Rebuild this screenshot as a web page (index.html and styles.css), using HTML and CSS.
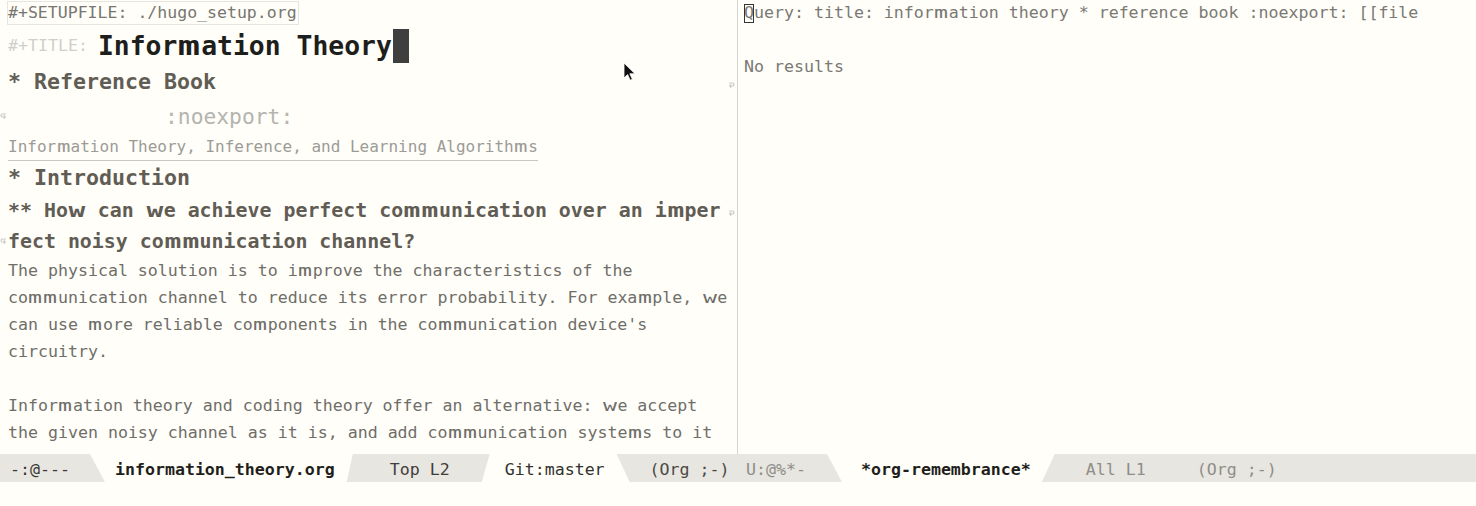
FILE: index.html
```html
<!DOCTYPE html>
<html>
<head>
<meta charset="utf-8">
<link rel="stylesheet" href="styles.css">
</head>
<body>
<div class="frame">
  <div class="windows">
    <div class="win win-left duo">
      <div class="row r1"><span class="meta-box">#+SETUPFILE: ./hugo_setup.org</span></div>
      <div class="row r2"><span class="title-key">#+TITLE: </span><span class="title">Information Theory</span><span class="cursor"></span></div>
      <div class="row r3 h1">* Reference Book<span class="fr fr-right"><svg width="7" height="8" viewBox="0 0 7 8"><path d="M1 1h3.5a1.5 1.5 0 0 1 0 3H1.5M1.5 4l1.8-1.6M1.5 4l1.8 1.6" fill="none" stroke="#c9c9c9" stroke-width="1.2"/></svg></span></div>
      <div class="row r4 tag"><span class="fr fr-left"><svg width="7" height="8" viewBox="0 0 7 8"><path d="M6 1H2.5a1.5 1.5 0 0 0 0 3H5.5M5.5 4l-1.8-1.6M5.5 4l-1.8 1.6" fill="none" stroke="#c9c9c9" stroke-width="1.2"/></svg></span>:noexport:</div>
      <div class="row r5"><span class="link">Information Theory, Inference, and Learning Algorithms</span></div>
      <div class="row r6 h1">* Introduction</div>
      <div class="row r7 h2">** How can we achieve perfect communication over an imper<span class="fr fr-right"><svg width="7" height="8" viewBox="0 0 7 8"><path d="M1 1h3.5a1.5 1.5 0 0 1 0 3H1.5M1.5 4l1.8-1.6M1.5 4l1.8 1.6" fill="none" stroke="#c9c9c9" stroke-width="1.2"/></svg></span></div>
      <div class="row r8 h2"><span class="fr fr-left"><svg width="7" height="8" viewBox="0 0 7 8"><path d="M6 1H2.5a1.5 1.5 0 0 0 0 3H5.5M5.5 4l-1.8-1.6M5.5 4l-1.8 1.6" fill="none" stroke="#c9c9c9" stroke-width="1.2"/></svg></span>fect noisy communication channel?</div>
      <div class="para">
        <div class="line">The physical solution is to improve the characteristics of the</div>
        <div class="line">communication channel to reduce its error probability. For example, we</div>
        <div class="line">can use more reliable components in the communication device's</div>
        <div class="line">circuitry.</div>
        <div class="line"> </div>
        <div class="line">Information theory and coding theory offer an alternative: we accept</div>
        <div class="line">the given noisy channel as it is, and add communication systems to it</div>
      </div>
      <svg class="pointer" width="14" height="20" viewBox="0 0 14 20"><path d="M1 1v15l3.6-3.4 2.6 5.6 2.2-1-2.6-5.4H12z" fill="#111" stroke="#fff" stroke-width="0.8"/></svg>
    </div>
    <div class="divider"></div>
    <div class="win win-right duo">
      <div class="rline"><span class="box-cursor">Q</span>uery: title: information theory * reference book :noexport: [[file</div>
      <div class="rline"> </div>
      <div class="rline">No results</div>
    </div>
  </div>
  <div class="modeline">
    <div class="ml ml-left">
      <span class="seg s-status">-:@---</span>
      <span class="seg light l1">information_theory.org</span>
      <span class="seg s-pos">Top L2</span>
      <span class="seg light l2">Git:master</span>
      <span class="seg s-mode">(Org ;-)</span>
    </div>
    <div class="ml ml-right">
      <span class="seg s-status2">U:@%*-</span>
      <span class="seg light l3">*org-remembrance*</span>
      <span class="seg s-pos2">All L1</span>
      <span class="seg s-mode2">(Org ;-)</span>
    </div>
  </div>
  <div class="echo"></div>
</div>
<script src="script.js"></script>
</body>
</html>
```
FILE: styles.css
```css
* { box-sizing: border-box; }
html, body { margin: 0; padding: 0; }
body {
  background: #fffef9;
  font-family: "DejaVu Sans Mono", "Liberation Mono", monospace;
  width: 1476px;
  height: 506px;
  overflow: hidden;
}
.frame { display: flex; flex-direction: column; width: 1476px; height: 506px; }
.windows { display: flex; height: 454px; }
.win { position: relative; overflow: hidden; height: 454px; }
.win-left { width: 737px; padding-left: 8px; }
.divider { width: 1px; background: #d4d3cf; height: 454px; }
.win-right { flex: 1; padding-left: 6px; }

/* duospace: m and w are one and a half cells wide */
.wide { display: inline-block; transform: scaleX(1.4); margin: 0 0.15em; }

.row { position: relative; white-space: pre; }
.r1 { height: 28px; padding-top: 1px; }
.meta-box {
  display: inline-block;
  border: 1px solid #e6e5e0;
  height: 24px;
  line-height: 22px;
  padding: 0 1px 0 0;
  margin-left: -1px;
  font-size: 16.55px;
  color: #777670;
}
.r2 { height: 36px; line-height: 36px; display: flex; align-items: center; }
.title-key { font-size: 16.6px; color: #cfcfcc; }
.title { font-size: 26.4px; font-weight: bold; color: #1e1e1c; }
.cursor { display: inline-block; width: 16px; height: 34px; background: #3f3f3f; margin-left: 1px; }
.h1 { font-size: 21.6px; font-weight: bold; color: #615c54; }
.h2 { font-size: 19.9px; font-weight: bold; color: #615c54; }
.r3 { height: 36px; line-height: 36px; }
.tag { height: 34px; line-height: 34px; font-size: 21.3px; color: #b5b4af; padding-left: 157px; }
.r5 { height: 27px; line-height: 25px; }
.link {
  display: inline-block;
  font-size: 16px;
  color: #9c9b96;
  border-bottom: 1px solid #c9c8c3;
  line-height: 25px;
  height: 27px;
}
.r6 { height: 33px; line-height: 33px; }
.r7 { height: 32px; line-height: 33px; }
.r8 { height: 31px; line-height: 31px; }

.fr { position: absolute; display: flex; align-items: center; height: 100%; top: 0; }
.fr-left { left: -8px; }
.fr-right { left: 720px; top: 4px; }

.para { font-size: 16.6px; color: #6f6e69; }
.line { height: 27px; line-height: 27px; white-space: pre; }

.pointer { position: absolute; left: 623px; top: 62px; }

.rline { height: 27px; line-height: 25px; font-size: 16.6px; color: #7a7974; white-space: pre; }
.box-cursor { outline: 1px solid #333; outline-offset: -1px; display: inline-block; line-height: 18px; height: 19px; }

.modeline {
  display: flex;
  height: 28px;
  background: #e8e6e0;
  font-size: 16.6px;
}
.ml { display: flex; height: 28px; white-space: pre; }
.ml-left { width: 738px; }
.ml-right { flex: 1; }
.seg { display: block; height: 28px; line-height: 31px; color: #4a4944; }
.light { background: #fffef9; color: #1f1e1b; }
.s-status { padding-left: 10px; color: #3a3935; }
.l1 {
  margin-left: 20px;
  padding: 0 18px 0 25px;
  font-weight: bold;
  clip-path: polygon(0 0, 100% 0, calc(100% - 6px) 100%, 15px 100%);
}
.s-pos { margin-left: 37px; color: #3f3e3a; }
.l2 {
  margin-left: 32px;
  padding: 0 25px 0 23px;
  color: #33322e;
  clip-path: polygon(8px 0, calc(100% - 13px) 0, 100% 100%, 0 100%);
}
.s-mode { margin-left: 20px; color: #4a4944; }
.s-status2 { padding-left: 8px; color: #8f8e89; }
.l3 {
  margin-left: 21px;
  padding: 0 24px 0 34px;
  font-weight: bold;
  clip-path: polygon(0 0, 100% 0, calc(100% - 13px) 100%, 15px 100%);
}
.s-pos2 { margin-left: 31px; color: #8f8e89; }
.s-mode2 { margin-left: 51px; color: #8f8e89; }
.echo { height: 24px; background: #fffef9; }
```
FILE: script.js
```js
// Duospace font emulation: widen m/w glyph cells by half a cell.
(function () {
  function walk(node) {
    Array.prototype.slice.call(node.childNodes).forEach(function (child) {
      if (child.nodeType === 3) {
        var text = child.nodeValue;
        if (!/[mwMW]/.test(text)) return;
        var frag = document.createDocumentFragment();
        text.split(/([mwMW])/).forEach(function (part) {
          if (!part) return;
          if (/^[mwMW]$/.test(part)) {
            var s = document.createElement('span');
            s.className = 'wide';
            s.textContent = part;
            frag.appendChild(s);
          } else {
            frag.appendChild(document.createTextNode(part));
          }
        });
        child.parentNode.replaceChild(frag, child);
      } else if (child.nodeType === 1 && child.namespaceURI === 'http://www.w3.org/1999/xhtml') {
        walk(child);
      }
    });
  }
  document.querySelectorAll('.duo').forEach(walk);
})();
```
